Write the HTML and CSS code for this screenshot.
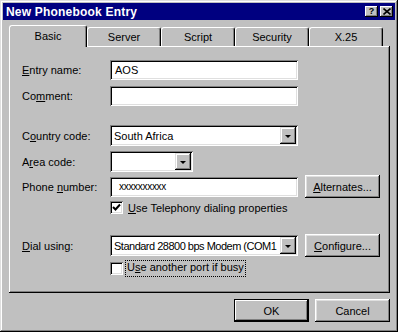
FILE: index.html
```html
<!DOCTYPE html>
<html>
<head>
    <meta charset="utf-8">
    <title>New Phonebook Entry</title>
    <link rel="stylesheet" href="styles.css">
</head>
<body>
    <div class="window">
        <div class="titlebar">
            <span class="title">New Phonebook Entry</span>
            <div class="caption-btns">
                <span class="cap-btn">?</span>
                <span class="cap-btn">
                    <svg width="8" height="7" viewBox="0 0 8 7"><path d="M0.5 0.5 L7.5 6.5 M7.5 0.5 L0.5 6.5" stroke="#000" stroke-width="1.6" fill="none"/></svg>
                </span>
            </div>
        </div>
        <div class="body">
            <div class="tabs">
                <div class="tab active">Basic</div>
                <div class="tab">Server</div>
                <div class="tab">Script</div>
                <div class="tab">Security</div>
                <div class="tab">X.25</div>
            </div>
            <div class="panel">
                <div class="row row-entry">
                    <span class="lbl"><u>E</u>ntry name:</span>
                    <div class="edit">AOS</div>
                </div>
                <div class="row row-comment">
                    <span class="lbl">Co<u>m</u>ment:</span>
                    <div class="edit"></div>
                </div>
                <div class="row row-country">
                    <span class="lbl">C<u>o</u>untry code:</span>
                    <div class="combo">
                        <span class="combo-text">South Africa</span>
                        <span class="drop"><span class="arrow"></span></span>
                    </div>
                </div>
                <div class="row row-area">
                    <span class="lbl">A<u>r</u>ea code:</span>
                    <div class="combo combo-short">
                        <span class="combo-text"></span>
                        <span class="drop"><span class="arrow"></span></span>
                    </div>
                </div>
                <div class="row row-phone">
                    <span class="lbl">Phone <u>n</u>umber:</span>
                    <div class="edit phone">xxxxxxxxxx</div>
                    <div class="btn side-btn"><u>A</u>lternates...</div>
                </div>
                <div class="row row-check1">
                    <span class="lbl"></span>
                    <span class="checkbox">
                        <svg width="9" height="9" viewBox="0 0 9 9"><path d="M1 4 L3.5 6.5 L8 1.5" stroke="#000" stroke-width="2" fill="none"/></svg>
                    </span>
                    <span class="check-text"><u>U</u>se Telephony dialing properties</span>
                </div>
                <div class="row row-dial">
                    <span class="lbl"><u>D</u>ial using:</span>
                    <div class="combo">
                        <span class="combo-text tight">Standard 28800 bps Modem (COM1</span>
                        <span class="drop"><span class="arrow"></span></span>
                    </div>
                    <div class="btn side-btn"><u>C</u>onfigure...</div>
                </div>
                <div class="row row-check2">
                    <span class="lbl"></span>
                    <span class="checkbox"></span>
                    <span class="check-text focus">U<u>s</u>e another port if busy</span>
                </div>
            </div>
            <div class="footer">
                <div class="btn default">OK</div>
                <div class="btn">Cancel</div>
            </div>
        </div>
    </div>
</body>
</html>
```

FILE: styles.css
```css
* {
    box-sizing: border-box;
}

body {
    margin: 0;
    font-family: "Liberation Sans", Arial, sans-serif;
    font-size: 11px;
    color: #000;
    background: #c0c0c0;
}

u {
    text-decoration: underline;
    text-underline-offset: 1px;
}

.window {
    width: 398px;
    height: 332px;
    padding: 3px;
    background: #c0c0c0;
    box-shadow: inset -1px -1px #000, inset 1px 1px #dfdfdf, inset -2px -2px #808080, inset 2px 2px #fff;
}

.titlebar {
    height: 17px;
    background: #000080;
    display: flex;
    align-items: center;
    justify-content: space-between;
    padding: 0 2px 0 3px;
}

.title {
    color: #fff;
    font-weight: 700;
    font-size: 12px;
    letter-spacing: 0.2px;
}

.caption-btns {
    display: flex;
    gap: 2px;
}

.cap-btn {
    width: 13px;
    height: 11px;
    background: #c0c0c0;
    display: flex;
    align-items: center;
    justify-content: center;
    font-size: 9px;
    font-weight: 700;
    line-height: 1;
    box-shadow: inset -1px -1px #000, inset 1px 1px #fff, inset -2px -2px #808080;
}

.body {
    width: 392px;
    padding: 5px 0 0 6px;
}

.tabs {
    display: flex;
    align-items: flex-end;
    height: 21px;
}

.tab {
    width: 74px;
    height: 19px;
    text-align: center;
    line-height: 19px;
    background: #c0c0c0;
    border-top: 1px solid #fff;
    border-left: 1px solid #fff;
    border-right: 1px solid #000;
    border-radius: 3px 3px 0 0;
    box-shadow: inset -1px 0 #808080;
}

.tab.active {
    width: 78px;
    height: 22px;
    margin-bottom: -1px;
    position: relative;
    z-index: 1;
    line-height: 21px;
}

.panel {
    width: 381px;
    height: 247px;
    padding: 14px 0 0 13px;
    box-shadow: inset -1px -1px #000, inset 1px 1px #fff, inset -2px -2px #808080;
}

.row {
    display: flex;
    align-items: center;
}

.lbl {
    width: 88px;
    flex: none;
}

.row-entry { height: 20px; }
.row-comment { height: 20px; margin-top: 6px; }
.row-country { height: 21px; margin-top: 19px; }
.row-area { height: 21px; margin-top: 5px; }
.row-phone { height: 23px; margin-top: 3px; }
.row-check1 { height: 13px; margin-top: 3px; }
.row-dial { height: 23px; margin-top: 20px; }
.row-check2 { height: 13px; margin-top: 5px; }

.edit {
    width: 188px;
    height: 20px;
    background: #fff;
    padding: 3px 5px;
    line-height: 14px;
    box-shadow: inset 1px 1px #808080, inset -1px -1px #fff, inset 2px 2px #000, inset -2px -2px #dfdfdf;
}

.edit.phone {
    padding-left: 9px;
    font-size: 10px;
    letter-spacing: -0.3px;
}

.combo {
    width: 188px;
    height: 21px;
    background: #fff;
    display: flex;
    align-items: center;
    padding: 2px;
    box-shadow: inset 1px 1px #808080, inset -1px -1px #fff, inset 2px 2px #000, inset -2px -2px #dfdfdf;
}

.combo-short {
    width: 83px;
}

.combo-text {
    flex: 1;
    padding-left: 2px;
    white-space: nowrap;
    overflow: hidden;
}

.combo-text.tight {
    letter-spacing: -0.5px;
}

.drop {
    width: 16px;
    height: 17px;
    flex: none;
    background: #c0c0c0;
    display: flex;
    align-items: center;
    justify-content: center;
    box-shadow: inset -1px -1px #000, inset 1px 1px #dfdfdf, inset -2px -2px #808080, inset 2px 2px #fff;
}

.arrow {
    width: 0;
    height: 0;
    border-left: 3px solid transparent;
    border-right: 3px solid transparent;
    border-top: 3px solid #000;
    margin-top: 1px;
}

.btn {
    width: 75px;
    height: 23px;
    background: #c0c0c0;
    display: flex;
    align-items: center;
    justify-content: center;
    box-shadow: inset -1px -1px #000, inset 1px 1px #fff, inset -2px -2px #808080, inset 2px 2px #dfdfdf;
}

.side-btn {
    margin-left: 7px;
}

.checkbox {
    width: 13px;
    height: 13px;
    flex: none;
    background: #fff;
    display: flex;
    align-items: center;
    justify-content: center;
    box-shadow: inset 1px 1px #808080, inset -1px -1px #fff, inset 2px 2px #000, inset -2px -2px #dfdfdf;
}

.check-text {
    margin-left: 5px;
}

.check-text.focus {
    margin-left: 3px;
    padding: 0 1px;
    height: 15px;
    line-height: 13px;
    outline: 1px dotted #000;
    outline-offset: 0;
}

.footer {
    display: flex;
    justify-content: flex-end;
    gap: 6px;
    width: 381px;
    margin-top: 6px;
}

.btn.default {
    box-shadow: inset 0 0 0 1px #000, inset -2px -2px #000, inset 2px 2px #fff, inset -3px -3px #808080;
}
```
